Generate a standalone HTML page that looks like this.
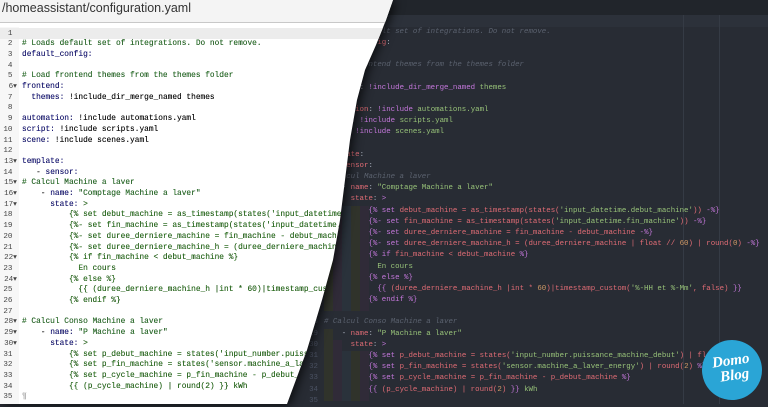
<!DOCTYPE html>
<html><head><meta charset="utf-8"><style>
*{margin:0;padding:0;box-sizing:border-box}
body{width:768px;height:404px;overflow:hidden;position:relative;background:#282c34;font-family:"Liberation Mono",monospace}
#dark{position:absolute;inset:0;background:#282c34}
#dark .top{position:absolute;left:0;top:0;width:768px;height:15px;background:#21252b}
#dark .act{position:absolute;left:0;top:15px;width:768px;height:12px;background:#2c313a}
#dark .rul{position:absolute;top:15px;bottom:0;width:1px;background:#353b45}
#dark .code{position:absolute;left:324px;top:15.4px;font-size:7.42px;line-height:11.19px;white-space:pre;color:#abb2bf}
#dark .nums{position:absolute;left:296px;width:22px;top:15.4px;font-size:7.42px;line-height:11.19px;text-align:right;color:#4b5263;white-space:pre}
.band{position:absolute;width:9px}
.k{color:#e06c75}.c{color:#5c6370;font-style:italic}.s{color:#98c379}.p{color:#c678dd}.n{color:#d19a66}.w{color:#abb2bf}
#lw{position:absolute;inset:0;filter:drop-shadow(3px 1px 5px rgba(0,0,0,.7))}
#light{position:absolute;inset:0;background:#fff;clip-path:polygon(0 0,393px 0,386px 20px,376px 45px,365px 70px,357px 100px,350px 140px,345px 180px,340px 220px,333px 260px,322px 300px,307px 350px,287px 404px,0 404px)}
#light .hdr{position:absolute;left:0;top:0;width:400px;height:23px;background:#f4f4f4;border-bottom:1px solid #c8c8c8;font-family:"Liberation Sans",sans-serif;font-size:12.5px;color:#333;padding:0 0 0 2px;line-height:16px}
#light .gut{position:absolute;left:0;top:27px;width:19px;height:380px;background:#f7f7f7}
#light .act{position:absolute;left:0;top:28px;width:400px;height:10.6px;background:#ececec}
#light .nums{position:absolute;left:0;top:28.5px;width:17px;font-size:7.6px;line-height:10.7px;color:#444;text-align:right;white-space:pre}
#light .code{position:absolute;left:22px;top:28.5px;font-size:7.83px;line-height:10.7px;white-space:pre;color:#111;text-shadow:0 0 .3px #111}
.lk{color:#1e1e86}.lc{color:#2f7a2f}.ls{color:#2f7a2f}.lj{color:#2f7a22}.li{color:#222}
#logo{position:absolute;left:702px;top:340px;width:60px;height:60px;border-radius:50%;background:#2aa5d6;color:#fff;font-family:"Liberation Serif",serif;font-style:italic;font-weight:bold;text-align:center;line-height:15px;font-size:15px;padding-top:14px;transform:rotate(-8deg)}
</style></head><body>
<div id="dark">
<div class="top"></div><div class="act"></div>
<div class="rul" style="left:683px"></div><div class="rul" style="left:719px"></div>
<div class="band" style="left:324px;top:183px;height:128px;background:#30332b"></div>
<div class="band" style="left:333px;top:194px;height:117px;background:#302b38"></div>
<div class="band" style="left:342px;top:206px;height:105px;background:#2a323b"></div>
<div class="band" style="left:351px;top:206px;height:105px;background:#30332b"></div>
<div class="band" style="left:360px;top:206px;height:105px;background:#302b38"></div>
<div class="band" style="left:324px;top:329px;height:72px;background:#30332b"></div>
<div class="band" style="left:333px;top:340px;height:61px;background:#302b38"></div>
<div class="band" style="left:342px;top:351px;height:50px;background:#2a323b"></div>
<div class="band" style="left:351px;top:351px;height:50px;background:#30332b"></div>
<div class="band" style="left:360px;top:351px;height:50px;background:#302b38"></div>
<div class="nums">1
2
3
4
5
6
7
8
9
10
11
12
13
14
15
16
17
18
19
20
21
22
23
24
25
26
27
28
29
30
31
32
33
34
35</div>
<div class="code">
<span class="c"># Loads default set of integrations. Do not remove.</span>
<span class="k">default_config</span>:

<span class="c"># Load frontend themes from the themes folder</span>
<span class="k">frontend</span>:
  <span class="k">themes</span>: <span class="p">!include_dir_merge_named</span> <span class="s">themes</span>

<span class="k">automation</span>: <span class="p">!include</span> <span class="s">automations.yaml</span>
<span class="k">script</span>: <span class="p">!include</span> <span class="s">scripts.yaml</span>
<span class="k">scene</span>: <span class="p">!include</span> <span class="s">scenes.yaml</span>

<span class="k">template</span>:
  - <span class="k">sensor</span>:
<span class="c"># Calcul Machine a laver</span>
    - <span class="k">name</span>: <span class="s">"Comptage Machine a laver"</span>
      <span class="k">state</span>: <span class="p">&gt;</span>
          <span class="p">{%</span> <span class="p">set</span> <span class="k">debut_machine = as_timestamp(states(</span><span class="s">'input_datetime.debut_machine'</span><span class="k">))</span> <span class="p">-%}</span>
          <span class="p">{%-</span> <span class="p">set</span> <span class="k">fin_machine = as_timestamp(states(</span><span class="s">'input_datetime.fin_machine'</span><span class="k">))</span> <span class="p">-%}</span>
          <span class="p">{%-</span> <span class="p">set</span> <span class="k">duree_derniere_machine = fin_machine - debut_machine</span> <span class="p">-%}</span>
          <span class="p">{%-</span> <span class="p">set</span> <span class="k">duree_derniere_machine_h = (duree_derniere_machine | float // </span><span class="n">60</span><span class="k">) | round(</span><span class="n">0</span><span class="k">)</span> <span class="p">-%}</span>
          <span class="p">{%</span> <span class="p">if</span> <span class="k">fin_machine &lt; debut_machine</span> <span class="p">%}</span>
            <span class="s">En cours</span>
          <span class="p">{%</span> <span class="p">else</span> <span class="p">%}</span>
            <span class="p">{{</span> <span class="k">(duree_derniere_machine_h |int * </span><span class="n">60</span><span class="k">)|timestamp_custom(</span><span class="s">'%-HH et %-Mm'</span><span class="k">, false)</span> <span class="p">}}</span>
          <span class="p">{%</span> <span class="p">endif</span> <span class="p">%}</span>

<span class="c"># Calcul Conso Machine a laver</span>
    - <span class="k">name</span>: <span class="s">"P Machine a laver"</span>
      <span class="k">state</span>: <span class="p">&gt;</span>
          <span class="p">{%</span> <span class="p">set</span> <span class="k">p_debut_machine = states(</span><span class="s">'input_number.puissance_machine_debut'</span><span class="k">) | float</span> <span class="p">%}</span>
          <span class="p">{%</span> <span class="p">set</span> <span class="k">p_fin_machine = states(</span><span class="s">'sensor.machine_a_laver_energy'</span><span class="k">) | round(</span><span class="n">2</span><span class="k">)</span> <span class="p">%}</span>
          <span class="p">{%</span> <span class="p">set</span> <span class="k">p_cycle_machine = p_fin_machine - p_debut_machine</span> <span class="p">%}</span>
          <span class="p">{{</span> <span class="k">(p_cycle_machine) | round(</span><span class="n">2</span><span class="k">)</span> <span class="p">}}</span> <span class="s">kWh</span>
</div>
<div id="logo">Domo<br>&nbsp;Blog</div>
</div>
<div id="lw"><div id="light">
<div class="hdr">/homeassistant/configuration.yaml</div>
<div class="gut"></div><div class="act"></div>
<div class="nums">1 
2 
3 
4 
5 
6▾
7 
8 
9 
10 
11 
12 
13▾
14 
15▾
16▾
17▾
18 
19 
20 
21 
22▾
23 
24▾
25 
26 
27 
28▾
29▾
30▾
31 
32 
33 
34 
35 </div>
<div class="code">
<span class="lc"># Loads default set of integrations. Do not remove.</span>
<span class="lk">default_config:</span>

<span class="lc"># Load frontend themes from the themes folder</span>
<span class="lk">frontend:</span>
  <span class="lk">themes:</span> !include_dir_merge_named themes

<span class="lk">automation:</span> !include automations.yaml
<span class="lk">script:</span> !include scripts.yaml
<span class="lk">scene:</span> !include scenes.yaml

<span class="lk">template:</span>
   - <span class="lk">sensor:</span>
<span class="lc"># Calcul Machine a laver</span>
    - <span class="lk">name:</span> <span class="ls">"Comptage Machine a laver"</span>
      <span class="lk">state:</span> <span class="lj">&gt;</span>
<span class="lj">          {% set debut_machine = as_timestamp(states('input_datetime.debut_machine')) -%}
          {%- set fin_machine = as_timestamp(states('input_datetime.fin_machine')) -%}
          {%- set duree_derniere_machine = fin_machine - debut_machine -%}
          {%- set duree_derniere_machine_h = (duree_derniere_machine | float // 60) | round(0) -%}
          {% if fin_machine &lt; debut_machine %}
            En cours
          {% else %}
            {{ (duree_derniere_machine_h |int * 60)|timestamp_custom('%-HH et %-Mm', false) }}
          {% endif %}</span>

<span class="lc"># Calcul Conso Machine a laver</span>
    - <span class="lk">name:</span> <span class="ls">"P Machine a laver"</span>
      <span class="lk">state:</span> <span class="lj">&gt;</span>
<span class="lj">          {% set p_debut_machine = states('input_number.puissance_machine_debut') | float %}
          {% set p_fin_machine = states('sensor.machine_a_laver_energy') | round(2) %}
          {% set p_cycle_machine = p_fin_machine - p_debut_machine %}
          {{ (p_cycle_machine) | round(2) }} kWh</span>
<span style="color:#ccc">¶</span></div>
</div></div>
</body></html>
